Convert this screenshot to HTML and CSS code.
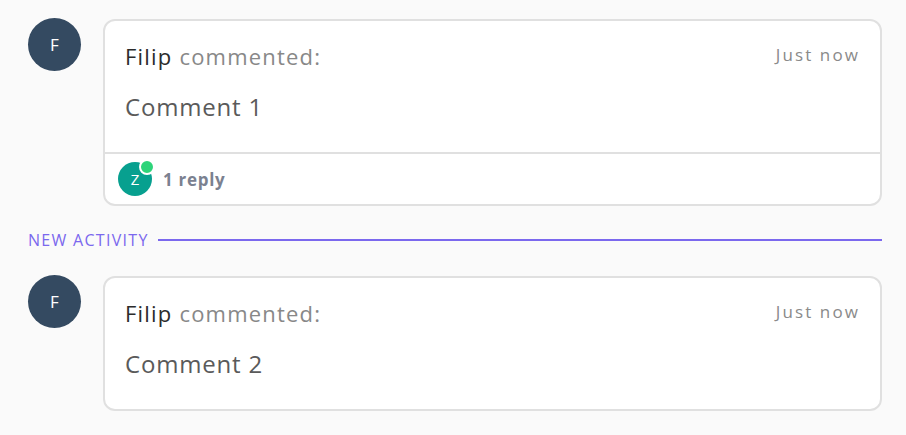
FILE: index.html
```html
<!DOCTYPE html>
<html>
<head>
<meta charset="utf-8">
<link rel="stylesheet" href="styles.css">
</head>
<body>
<div class="feed">
  <div class="item">
    <div class="avatar">F</div>
    <div class="card">
      <div class="card-body">
        <div class="card-head">
          <div class="who"><span class="name">Filip</span> commented:</div>
          <div class="time">Just now</div>
        </div>
        <div class="text">Comment 1</div>
      </div>
      <div class="card-foot">
        <div class="mini-avatar">Z<span class="dot"></span></div>
        <span class="replies">1 reply</span>
      </div>
    </div>
  </div>
  <div class="divider">
    <span class="divider-label">NEW ACTIVITY</span>
    <span class="divider-line"></span>
  </div>
  <div class="item">
    <div class="avatar">F</div>
    <div class="card">
      <div class="card-body">
        <div class="card-head">
          <div class="who"><span class="name">Filip</span> commented:</div>
          <div class="time">Just now</div>
        </div>
        <div class="text">Comment 2</div>
      </div>
    </div>
  </div>
</div>
</body>
</html>
```

FILE: styles.css
```css
html, body {
  margin: 0;
  padding: 0;
  background: #fafafa;
  font-family: "Open Sans", "Noto Sans", sans-serif;
}
.feed {
  padding: 19px 24px 0 28px;
  display: flex;
  flex-direction: column;
}
.item {
  display: flex;
  align-items: flex-start;
  gap: 22px;
}
.avatar {
  width: 53px;
  height: 53px;
  flex: none;
  border-radius: 50%;
  background: #344a61;
  color: #fff;
  font-size: 17px;
  display: flex;
  align-items: center;
  justify-content: center;
  margin-top: -1px;
}
.card {
  flex: 1;
  background: #fff;
  border: 2px solid #e0e0e0;
  border-radius: 12px;
}
.card-body {
  padding: 20px 22px 30px 20px;
}
.card-head {
  display: flex;
  justify-content: space-between;
  align-items: center;
  height: 30px;
}
.who {
  font-size: 22px;
  letter-spacing: 1.2px;
  color: #888;
}
.name {
  color: #2b2b2b;
}
.time {
  font-size: 17px;
  letter-spacing: 2.1px;
  margin-right: -2px;
  margin-bottom: 3px;
  color: #8a8a8a;
}
.text {
  margin-top: 21px;
  height: 30px;
  line-height: 30px;
  font-size: 24px;
  letter-spacing: 0.8px;
  color: #5a5a5a;
}
.card-foot {
  border-top: 2px solid #e0e0e0;
  height: 50px;
  display: flex;
  align-items: center;
  padding-left: 13px;
  gap: 11px;
}
.mini-avatar {
  position: relative;
  width: 34px;
  height: 34px;
  border-radius: 50%;
  background: #07a08f;
  color: #fff;
  font-size: 15px;
  display: flex;
  align-items: center;
  justify-content: center;
}
.dot {
  position: absolute;
  top: -3px;
  right: -3px;
  width: 12px;
  height: 12px;
  border-radius: 50%;
  background: #2ed47a;
  border: 2px solid #fff;
}
.replies {
  font-size: 17px;
  font-weight: 700;
  letter-spacing: 0.7px;
  color: #7b8190;
}
.divider {
  display: flex;
  align-items: center;
  gap: 9px;
  margin: 24px 0 26px;
}
.divider-label {
  font-size: 16px;
  letter-spacing: 1.3px;
  color: #7b68ee;
  line-height: 20px;
}
.divider-line {
  flex: 1;
  height: 2px;
  background: #7b68ee;
}
```
